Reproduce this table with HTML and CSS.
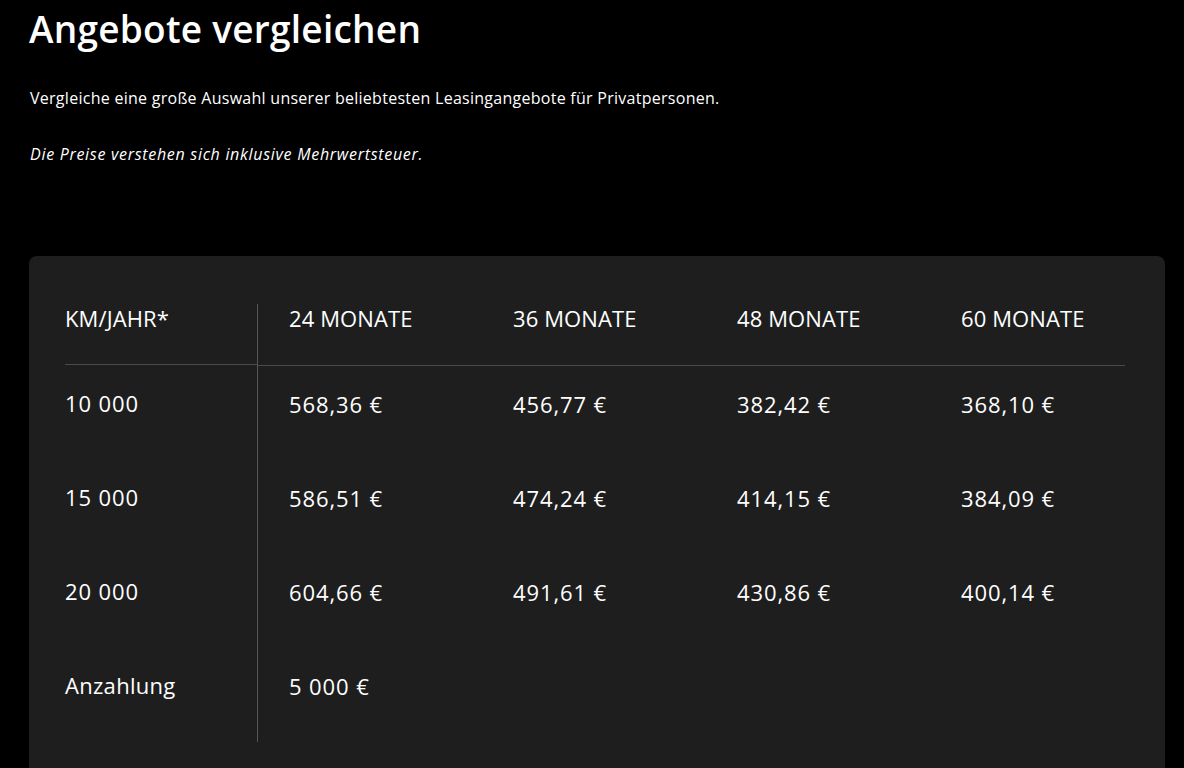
FILE: index.html
```html
<!DOCTYPE html>
<html lang="de">
<head>
<meta charset="utf-8">
<title>Angebote vergleichen</title>
<link rel="stylesheet" href="styles.css">
</head>
<body>
<main class="page">
  <h1 class="title">Angebote vergleichen</h1>
  <p class="lead">Vergleiche eine große Auswahl unserer beliebtesten Leasingangebote für Privatpersonen.</p>
  <p class="note">Die Preise verstehen sich inklusive Mehrwertsteuer.</p>

  <section class="card">
    <div class="table">
      <div class="labels">
        <div class="cell head">KM/JAHR*</div>
        <div class="cell num">10 000</div>
        <div class="cell num">15 000</div>
        <div class="cell num">20 000</div>
        <div class="cell word">Anzahlung</div>
      </div>
      <div class="data">
        <div class="row head">
          <div class="cell">24 MONATE</div>
          <div class="cell">36 MONATE</div>
          <div class="cell">48 MONATE</div>
          <div class="cell">60 MONATE</div>
        </div>
        <div class="row">
          <div class="cell num">568,36 €</div>
          <div class="cell num">456,77 €</div>
          <div class="cell num">382,42 €</div>
          <div class="cell num">368,10 €</div>
        </div>
        <div class="row">
          <div class="cell num">586,51 €</div>
          <div class="cell num">474,24 €</div>
          <div class="cell num">414,15 €</div>
          <div class="cell num">384,09 €</div>
        </div>
        <div class="row">
          <div class="cell num">604,66 €</div>
          <div class="cell num">491,61 €</div>
          <div class="cell num">430,86 €</div>
          <div class="cell num">400,14 €</div>
        </div>
        <div class="row">
          <div class="cell num">5 000 €</div>
        </div>
      </div>
    </div>
  </section>
</main>
</body>
</html>
```
FILE: styles.css
```css
* { box-sizing: border-box; }
html, body {
  margin: 0;
  background: #000;
  color: #fff;
  font-family: "Open Sans", "Noto Sans", sans-serif;
}
.page {
  padding: 0 19px 0 29px;
}
.title {
  margin: 0;
  padding-top: 6px;
  font-size: 37px;
  line-height: 46px;
  font-weight: 600;
  letter-spacing: 0.25px;
}
.lead {
  margin: 34px 0 0 1px;
  font-size: 16px;
  line-height: 24px;
  letter-spacing: 0.27px;
}
.note {
  margin: 32px 0 0 1px;
  font-size: 16px;
  line-height: 24px;
  font-style: italic;
  letter-spacing: 0.7px;
}
.card {
  margin-top: 90px;
  background: #1e1e1e;
  border-radius: 8px;
  padding: 48px 40px 40px 36px;
  min-height: 540px;
}
.table {
  display: flex;
  font-size: 22px;
}
.labels {
  width: 192px;
  flex: none;
}
.labels .cell,
.row .cell {
  line-height: 28px;
  height: 94px;
  padding-top: 24px;
}
.labels .cell.head,
.row.head .cell {
  height: 61px;
  padding-top: 0;
  letter-spacing: 0.1px;
}
.labels .cell.head {
  border-bottom: 1px solid #4a4a4a;
}
.cell.num {
  letter-spacing: 0.9px;
}
.cell.word {
  letter-spacing: 0.3px;
}
.data {
  flex: 1;
  border-left: 1px solid #555;
}
.row {
  display: grid;
  grid-template-columns: 224px 224px 224px 1fr;
}
.row.head {
  border-bottom: 1px solid #4a4a4a;
}
.row .cell {
  padding-left: 31px;
}
.data .row:last-child .cell,
.labels .cell:last-child {
  height: 94px;
}
```
